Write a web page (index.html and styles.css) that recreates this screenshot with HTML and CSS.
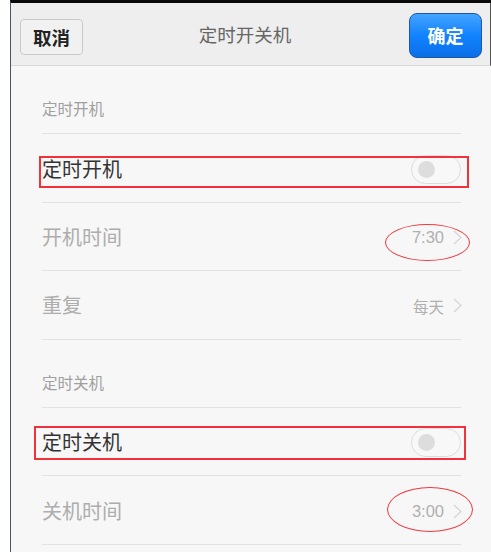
FILE: index.html
```html
<!DOCTYPE html>
<html lang="zh-CN">
<head>
<meta charset="utf-8">
<title>定时开关机</title>
<link rel="stylesheet" href="styles.css">
</head>
<body>
<div class="frame">
  <header class="nav">
    <button class="btn btn-cancel">取消</button>
    <div class="nav-title">定时开关机</div>
    <button class="btn btn-ok">确定</button>
  </header>
  <main class="content">
    <div class="section-head">定时开机</div>
    <div class="row">
      <span class="label">定时开机</span>
      <span class="toggle"><span class="knob"></span></span>
      <span class="mark-box mark-box-1"></span>
    </div>
    <div class="row">
      <span class="label dim">开机时间</span>
      <span class="value">7:30<svg class="chev" width="9" height="15" viewBox="0 0 9 15"><path d="M1 1 L8 7.5 L1 14" fill="none" stroke="#d4d4d4" stroke-width="1.2"/></svg></span>
      <span class="mark-oval mark-oval-1"></span>
    </div>
    <div class="row">
      <span class="label dim">重复</span>
      <span class="value small">每天<svg class="chev" width="9" height="15" viewBox="0 0 9 15"><path d="M1 1 L8 7.5 L1 14" fill="none" stroke="#d4d4d4" stroke-width="1.2"/></svg></span>
    </div>
    <div class="section-head">定时关机</div>
    <div class="row">
      <span class="label">定时关机</span>
      <span class="toggle"><span class="knob"></span></span>
      <span class="mark-box mark-box-2"></span>
    </div>
    <div class="row">
      <span class="label dim">关机时间</span>
      <span class="value">3:00<svg class="chev" width="9" height="15" viewBox="0 0 9 15"><path d="M1 1 L8 7.5 L1 14" fill="none" stroke="#d4d4d4" stroke-width="1.2"/></svg></span>
      <span class="mark-oval mark-oval-2"></span>
    </div>
  </main>
</div>
</body>
</html>
```
FILE: styles.css
```css
html, body {
  margin: 0;
  padding: 0;
  background: #ffffff;
  height: 100%;
  overflow: hidden;
}
body {
  font-family: "Noto Sans CJK SC", "Noto Sans", "Liberation Sans", sans-serif;
}
.frame {
  margin-left: 10px;
  border-left: 1px solid #4a5566;
  border-top: 3px solid #0a0a0a;
  min-height: 100%;
  background: #f7f7f7;
}
.nav {
  height: 63px;
  box-sizing: border-box;
  background: #eeeeee;
  border-bottom: 1px solid #d9d9d9;
  border-right: 1px solid #555;
  display: flex;
  align-items: center;
  justify-content: space-between;
  padding: 0 8px 0 9px;
  position: relative;
}
.nav-title {
  position: absolute;
  left: 0;
  right: 0;
  text-align: center;
  font-size: 18.5px;
  color: #666;
  pointer-events: none;
  margin-left: -11px;
}
.btn {
  font-family: inherit;
  font-weight: bold;
  cursor: pointer;
  padding: 0;
}
.btn-cancel {
  width: 63px;
  height: 36px;
  margin-top: 6px;
  border: 1px solid #c9c9c9;
  border-radius: 4px;
  background: #f1f1f1;
  color: #222;
  font-size: 18.5px;
}
.btn-ok {
  width: 73px;
  height: 45px;
  margin-top: 2px;
  border: 1px solid #1c58a8;
  border-radius: 8px;
  background: linear-gradient(#44a4ff, #1283ff 50%, #0a6fe8);
  color: #fff;
  font-size: 18px;
}
.content {
  padding: 0 30px 0 31px;
}
.section-head {
  border-bottom: 1px solid #e2e2e2;
  display: flex;
  align-items: flex-end;
  padding-bottom: 14px;
  box-sizing: border-box;
  height: 68.4px;
  font-size: 15.5px;
  color: #a0a0a0;
}
.row {
  position: relative;
  height: 68.4px;
  box-sizing: border-box;
  border-bottom: 1px solid #e2e2e2;
  display: flex;
  align-items: center;
  justify-content: space-between;
}
.label {
  font-size: 20px;
  color: #333;
}
.label.dim {
  color: #adadad;
}
.value {
  display: flex;
  align-items: center;
  gap: 9px;
  padding-top: 3px;
  font-size: 16.5px;
  color: #b0b0b0;
  font-family: "Liberation Sans", "Noto Sans CJK SC", sans-serif;
}
.value.small {
  font-size: 15.5px;
  padding-top: 2px;
  font-family: "Noto Sans CJK SC", sans-serif;
}
.chev {
  display: block;
  margin-top: -1px;
  margin-right: -1px;
}
.toggle {
  width: 48px;
  height: 27px;
  border: 1px solid #dcdcdc;
  border-radius: 15px;
  background: #f8f8f8;
  position: relative;
  margin-top: 2px;
}
.knob {
  position: absolute;
  left: 6px;
  top: 5px;
  width: 17px;
  height: 17px;
  border-radius: 50%;
  background: #dddddd;
}
.mark-box {
  position: absolute;
  border: 2px solid #f0333a;
  box-sizing: border-box;
}
.mark-box-1 {
  left: -3px;
  right: -8px;
  top: 22px;
  height: 32px;
}
.mark-box-2 {
  left: -8px;
  right: -5px;
  top: 18px;
  height: 34px;
}
.mark-oval {
  position: absolute;
  border: 1px solid #ee3a40;
  border-radius: 50%;
  box-sizing: border-box;
}
.mark-oval-1 {
  right: -9px;
  width: 85px;
  top: 21px;
  height: 37px;
}
.mark-oval-2 {
  right: -12px;
  width: 86px;
  top: 11px;
  height: 45px;
}
```
